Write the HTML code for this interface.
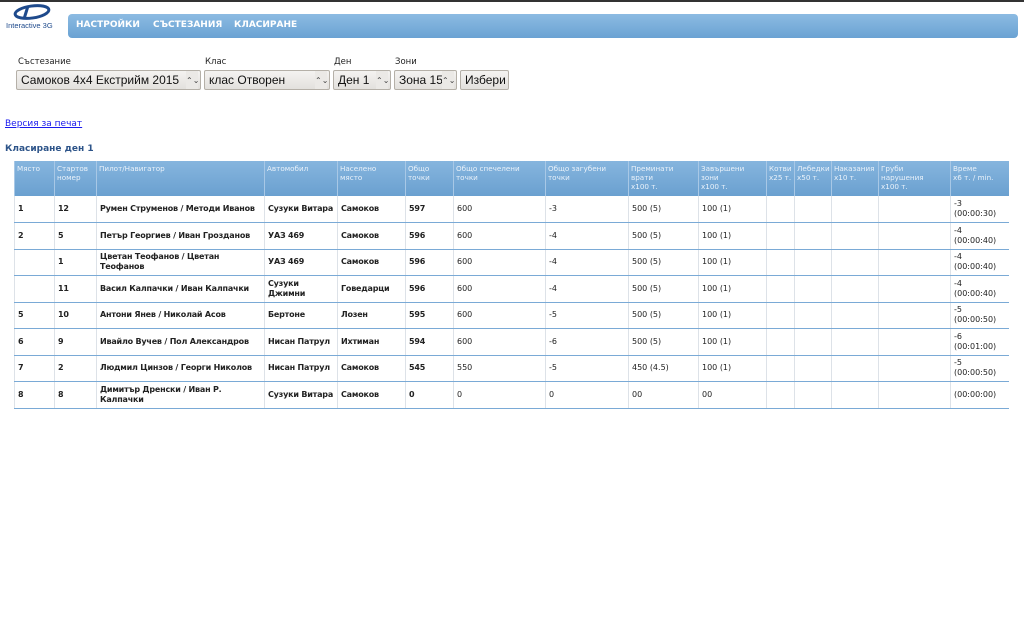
<!DOCTYPE html>
<html><head><meta charset="utf-8"><style>
body{margin:0;width:1024px;height:640px;background:#fff;font-family:"DejaVu Sans","Liberation Sans",sans-serif;position:relative;overflow:hidden}
.topline{position:absolute;left:0;top:0;width:1024px;height:2px;background:#333}
.nav{position:absolute;left:68px;top:14px;width:950px;height:24px;border-radius:4px;background:linear-gradient(#8cbbe2,#6aa2d3);}
.nav span{position:absolute;top:6px;color:#fff;font-weight:bold;font-size:9px}
.lbl{position:absolute;top:57px;font-size:8.5px;color:#222}
.sel{position:absolute;top:70px;height:20px;border:1px solid #b5b0a8;border-radius:2px;background:linear-gradient(#f4f3f1,#e3e1dd);font-family:"Liberation Sans",sans-serif;font-size:12px;line-height:19px;padding-left:4px;box-sizing:border-box;color:#111;overflow:hidden;white-space:nowrap}
.sel i{position:absolute;right:2px;top:0;width:12px;text-align:center;font-style:normal;font-size:8px;color:#444;background:#ebe9e6}
a{position:absolute;left:5px;top:119px;font-size:9px;color:#1a1aee}
.h{position:absolute;left:5px;top:144px;font-size:9px;font-weight:bold;color:#2d5489}
table{position:absolute;left:14px;top:161px;border-collapse:collapse;table-layout:fixed;width:994px}
th{background:linear-gradient(#86b5de,#6aa0d0);color:#eaf2fa;font-weight:normal;text-align:left;vertical-align:top;height:35px;padding:3px 2px 0;border-left:1px solid #a8c8e6;font-size:7.2px;line-height:9px;box-sizing:border-box;overflow:hidden}
td{height:26.5px;padding:0 1px 0 3px;border-left:1px solid #dde2e8;border-bottom:1.5px solid #7aaad6;color:#222;font-size:8px;line-height:10px;box-sizing:border-box;white-space:nowrap}
td.b{font-weight:bold;letter-spacing:-0.2px}
</style></head><body>
<div class="topline"></div>
<svg style="position:absolute;left:6px;top:3px" width="52" height="26"><ellipse cx="26" cy="9" rx="17" ry="6" fill="none" stroke="#1e4a8c" stroke-width="3" transform="rotate(-8 26 9)"/><path d="M22 3 L18 16" stroke="#1e4a8c" stroke-width="3"/><text x="0" y="25" font-size="7.5" fill="#1e4a8c" font-family="Liberation Sans">Interactive 3G</text></svg>
<div class="nav"><span style="left:8px">НАСТРОЙКИ</span><span style="left:85px">СЪСТЕЗАНИЯ</span><span style="left:166px">КЛАСИРАНЕ</span></div>
<div class="lbl" style="left:18px">Състезание</div><div class="lbl" style="left:205px">Клас</div><div class="lbl" style="left:334px">Ден</div><div class="lbl" style="left:395px">Зони</div>
<div class="sel" style="left:16px;width:185px">Самоков 4x4 Екстрийм 2015<i>⌃⌄</i></div>
<div class="sel" style="left:204px;width:126px">клас Отворен<i>⌃⌄</i></div>
<div class="sel" style="left:333px;width:58px">Ден 1<i>⌃⌄</i></div>
<div class="sel" style="left:394px;width:63px">Зона 15<i>⌃⌄</i></div>
<div class="sel" style="left:460px;width:49px">Избери</div>
<a href="#">Версия за печат</a>
<div class="h">Класиране ден 1</div>
<table>
<colgroup><col style="width:40px"><col style="width:42px"><col style="width:168px"><col style="width:73px"><col style="width:68px"><col style="width:48px"><col style="width:92px"><col style="width:83px"><col style="width:70px"><col style="width:68px"><col style="width:28px"><col style="width:37px"><col style="width:47px"><col style="width:72px"><col style="width:58px"></colgroup>
<tr><th>Място</th><th>Стартов номер</th><th>Пилот/Навигатор</th><th>Автомобил</th><th>Населено<br>място</th><th>Общо точки</th><th>Общо спечелени точки</th><th>Общо загубени точки</th><th>Преминати врати<br>x100 т.</th><th>Завършени зони<br>x100 т.</th><th>Котви x25 т.</th><th>Лебедки x50 т.</th><th>Наказания x10 т.</th><th>Груби<br>нарушения<br>x100 т.</th><th>Време<br>x6 т. / min.</th></tr>
<tr><td class="b">1</td><td class="b">12</td><td class="b">Румен Струменов / Методи Иванов</td><td class="b">Сузуки Витара</td><td class="b">Самоков</td><td class="b">597</td><td>600</td><td>-3</td><td>500 (5)</td><td>100 (1)</td><td></td><td></td><td></td><td></td><td>-3<br>(00:00:30)</td></tr>
<tr><td class="b">2</td><td class="b">5</td><td class="b">Петър Георгиев / Иван Грозданов</td><td class="b">УАЗ 469</td><td class="b">Самоков</td><td class="b">596</td><td>600</td><td>-4</td><td>500 (5)</td><td>100 (1)</td><td></td><td></td><td></td><td></td><td>-4<br>(00:00:40)</td></tr>
<tr><td></td><td class="b">1</td><td class="b">Цветан Теофанов / Цветан<br>Теофанов</td><td class="b">УАЗ 469</td><td class="b">Самоков</td><td class="b">596</td><td>600</td><td>-4</td><td>500 (5)</td><td>100 (1)</td><td></td><td></td><td></td><td></td><td>-4<br>(00:00:40)</td></tr>
<tr><td></td><td class="b">11</td><td class="b">Васил Калпачки / Иван Калпачки</td><td class="b">Сузуки<br>Джимни</td><td class="b">Говедарци</td><td class="b">596</td><td>600</td><td>-4</td><td>500 (5)</td><td>100 (1)</td><td></td><td></td><td></td><td></td><td>-4<br>(00:00:40)</td></tr>
<tr><td class="b">5</td><td class="b">10</td><td class="b">Антони Янев / Николай Асов</td><td class="b">Бертоне</td><td class="b">Лозен</td><td class="b">595</td><td>600</td><td>-5</td><td>500 (5)</td><td>100 (1)</td><td></td><td></td><td></td><td></td><td>-5<br>(00:00:50)</td></tr>
<tr><td class="b">6</td><td class="b">9</td><td class="b">Ивайло Вучев / Пол Александров</td><td class="b">Нисан Патрул</td><td class="b">Ихтиман</td><td class="b">594</td><td>600</td><td>-6</td><td>500 (5)</td><td>100 (1)</td><td></td><td></td><td></td><td></td><td>-6<br>(00:01:00)</td></tr>
<tr><td class="b">7</td><td class="b">2</td><td class="b">Людмил Цинзов / Георги Николов</td><td class="b">Нисан Патрул</td><td class="b">Самоков</td><td class="b">545</td><td>550</td><td>-5</td><td>450 (4.5)</td><td>100 (1)</td><td></td><td></td><td></td><td></td><td>-5<br>(00:00:50)</td></tr>
<tr><td class="b">8</td><td class="b">8</td><td class="b">Димитър Дренски / Иван Р.<br>Калпачки</td><td class="b">Сузуки Витара</td><td class="b">Самоков</td><td class="b">0</td><td>0</td><td>0</td><td>00</td><td>00</td><td></td><td></td><td></td><td></td><td>(00:00:00)</td></tr>
</table>
</body></html>
